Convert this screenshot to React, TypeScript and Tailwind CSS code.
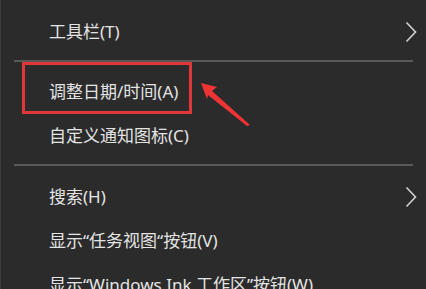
const row = "h-[44px] flex items-center justify-between pl-[48px] pr-[9px] text-[17px] text-[#e4e4e4]";
const sep = "mx-[13px] h-[2px] bg-[#595959]";

function Chevron() {
  return (
    <svg width="12" height="22" viewBox="0 0 12 22" className="shrink-0">
      <polyline points="1.5,1.5 10.5,11 1.5,20.5" fill="none" stroke="#d2d2d2" strokeWidth="1.6" />
    </svg>
  );
}

export default function App() {
  return (
    <div
      className="relative w-[426px] h-[289px] overflow-hidden bg-[#2b2b2b] border-l border-[#3d3d3d]"
      style={{ fontFamily: '"Noto Sans", "Noto Sans CJK SC", sans-serif' }}
    >
      <div className="pt-[10px]">
        <div className={row}>
          <span>工具栏(T)</span>
          <Chevron />
        </div>
        <div className={`${sep} mt-[6px]`} />
        <div className={`${row} mt-[8px]`}>
          <span>调整日期/时间(A)</span>
        </div>
        <div className={row}>
          <span>自定义通知图标(C)</span>
        </div>
        <div className={`${sep} mt-[6px]`} />
        <div className={`${row} mt-[9px]`}>
          <span>搜索(H)</span>
          <Chevron />
        </div>
        <div className={row}>
          <span>显示“任务视图“按钮(V)</span>
        </div>
        <div className={row}>
          <span>显示“Windows Ink 工作区”按钮(W)</span>
        </div>
      </div>

      {/* annotation */}
      <div className="absolute left-[21px] top-[62px] w-[170px] h-[52px] border-[3px] border-[#e0383a]" />
      <svg className="absolute left-0 top-0" width="426" height="289" viewBox="0 0 426 289">
        <polygon points="200,83 216,87 211,91 249,125 246,126 207,95 206,99" fill="#f03434" />
      </svg>
    </div>
  );
}
